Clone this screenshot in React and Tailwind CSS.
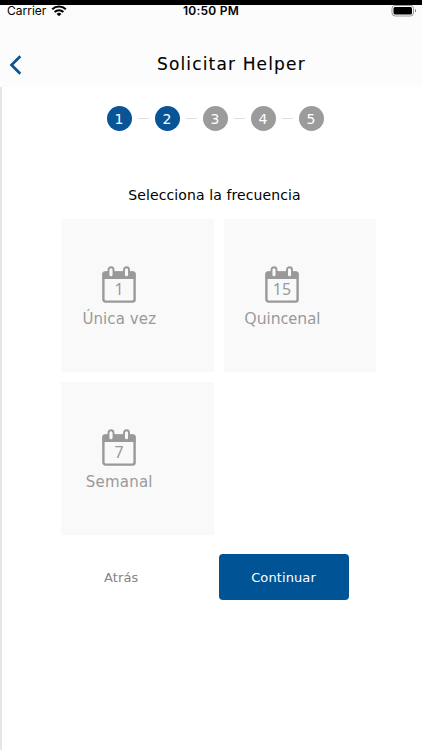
import React, { useState } from 'react'
import clsx from 'clsx'

const STEPS = [1, 2, 3, 4, 5]

const OPTIONS = [
  { id: 'once', label: 'Única vez', day: '1', labelClass: 'text-[15px] tracking-[0.1px]' },
  { id: 'biweekly', label: 'Quincenal', day: '15', labelClass: "font-['Noto_Sans',sans-serif] text-[16px] -mt-px pl-px" },
  { id: 'weekly', label: 'Semanal', day: '7', labelClass: 'text-[15px] tracking-[0.2px]' },
]

function StatusBar() {
  return (
    <div className="flex h-[12px] items-center justify-between pl-[7px] pr-[5px] font-['Inter',sans-serif] text-black">
      <div className="flex w-[149px] items-center gap-[5px]">
        <span className="text-[12px] leading-[12px]">Carrier</span>
        <svg width="16" height="12" viewBox="0 0 16 12" fill="none" stroke="#000">
          <path d="M1.2 4.3a9.8 9.8 0 0 1 13.6 0" strokeWidth="2.1" />
          <path d="M3.6 7a6.3 6.3 0 0 1 8.8 0" strokeWidth="2" />
          <path d="M8 11.3 5.6 8.9a3.4 3.4 0 0 1 4.8 0Z" fill="#000" stroke="none" />
        </svg>
      </div>
      <span className="text-[12px] font-semibold leading-[12px] tracking-[0.25px]">10:50 PM</span>
      <div className="flex w-[151px] justify-end">
        <svg width="26" height="12" viewBox="0 0 26 12">
          <rect x="1" y="0.5" width="21.5" height="10.5" rx="3" fill="#fff" stroke="#999" />
          <rect x="2.5" y="2" width="18.5" height="7.5" rx="1.5" fill="#000" />
          <path d="M24 4v3.4a1.9 1.9 0 0 0 0-3.4Z" fill="#777" />
        </svg>
      </div>
    </div>
  )
}

function Header() {
  return (
    <header className="h-[87px] shrink-0 border-t-[5px] border-black bg-[#fcfcfc]">
      <StatusBar />
      <div className="flex h-[70px] items-center pl-[9px] pt-[25px]">
        <button aria-label="Volver" className="w-[13px]">
          <svg width="13" height="20" viewBox="0 0 13 20" fill="none" stroke="#085497" strokeWidth="2.7">
            <path d="M11.3 1.2 2.5 10l8.8 8.8" />
          </svg>
        </button>
        <h1 className="ml-[135px] whitespace-nowrap pb-[2px] text-[17px] leading-[20px] tracking-[1.15px] text-black [-webkit-text-stroke:0.1px_#000]">
          Solicitar Helper
        </h1>
      </div>
    </header>
  )
}

function Stepper({ current }) {
  return (
    <div className="flex items-center justify-center pl-[6px]">
      {STEPS.map((n) => (
        <React.Fragment key={n}>
          {n > 1 && <span className="mx-[6px] h-px w-[11px] bg-[#dedede]" />}
          <span
            className={clsx(
              'flex size-[25px] items-center justify-center rounded-full pt-px text-[14px] leading-none text-white',
              n <= current ? 'bg-[#085497]' : 'bg-[#9b9b9b]',
            )}
          >
            {n}
          </span>
        </React.Fragment>
      ))}
    </div>
  )
}

function CalendarIcon({ day }) {
  return (
    <svg width="34" height="37" viewBox="0 0 34 37">
      <rect x="1.4" y="6.4" width="31.2" height="29.2" rx="2" fill="none" stroke="#999" strokeWidth="2.4" />
      <path d="M.5 13V8q0-2.500 2.500-2.500h28Q33.500 5.500 33.500 8v5Z" fill="#999" />
      <rect x="6.5" y="1.3" width="5" height="10" rx="2.5" fill="#f9f9f9" stroke="#999" strokeWidth="1.9" />
      <rect x="22" y="1.3" width="5" height="10" rx="2.5" fill="#f9f9f9" stroke="#999" strokeWidth="1.9" />
      <text x="17" y="28.5" textAnchor="middle" fill="#999" className="font-['Noto_Sans',sans-serif] text-[16px]">{day}</text>
    </svg>
  )
}

function OptionCard({ option, onSelect }) {
  return (
    <button
      onClick={() => onSelect(option.id)}
      className="flex h-[153px] flex-col items-center bg-[#f9f9f9] pt-[47px] pr-[36px] text-[#999]"
    >
      <CalendarIcon day={option.day} />
      <span className="mt-[5px] flex whitespace-nowrap">
        <span className={clsx('leading-[22px]', option.labelClass)}>{option.label}</span>
      </span>
    </button>
  )
}

export default function App() {
  const [, setSelected] = useState(null)

  return (
    <div className="flex h-[750px] w-[422px] flex-col overflow-hidden bg-white font-['DejaVu_Sans',sans-serif]">
      <Header />
      <main className="flex flex-1 flex-col border-l-2 border-[#e6e6e6] pt-[19px]">
        <Stepper current={2} />
        <h2 className="mt-[54px] pl-[5px] text-center text-[14px] leading-[20px] tracking-[0.1px] text-black">Selecciona la frecuencia</h2>
        <div className="ml-[59px] mt-[14px] grid w-[315px] grid-cols-2 gap-[10px]">
          {OPTIONS.map((o) => (
            <OptionCard key={o.id} option={o} onSelect={setSelected} />
          ))}
        </div>
        <div className="mt-[19px] flex items-center pl-[102px]">
          <button className="w-[115px] pt-[2px] text-left text-[13px] tracking-[0.1px] text-[#858585]">Atrás</button>
          <button className="h-[46px] w-[130px] rounded-[4px] bg-[#005395] pt-[2px] pr-px text-[13px] tracking-[0.1px] text-white">Continuar</button>
        </div>
      </main>
    </div>
  )
}
